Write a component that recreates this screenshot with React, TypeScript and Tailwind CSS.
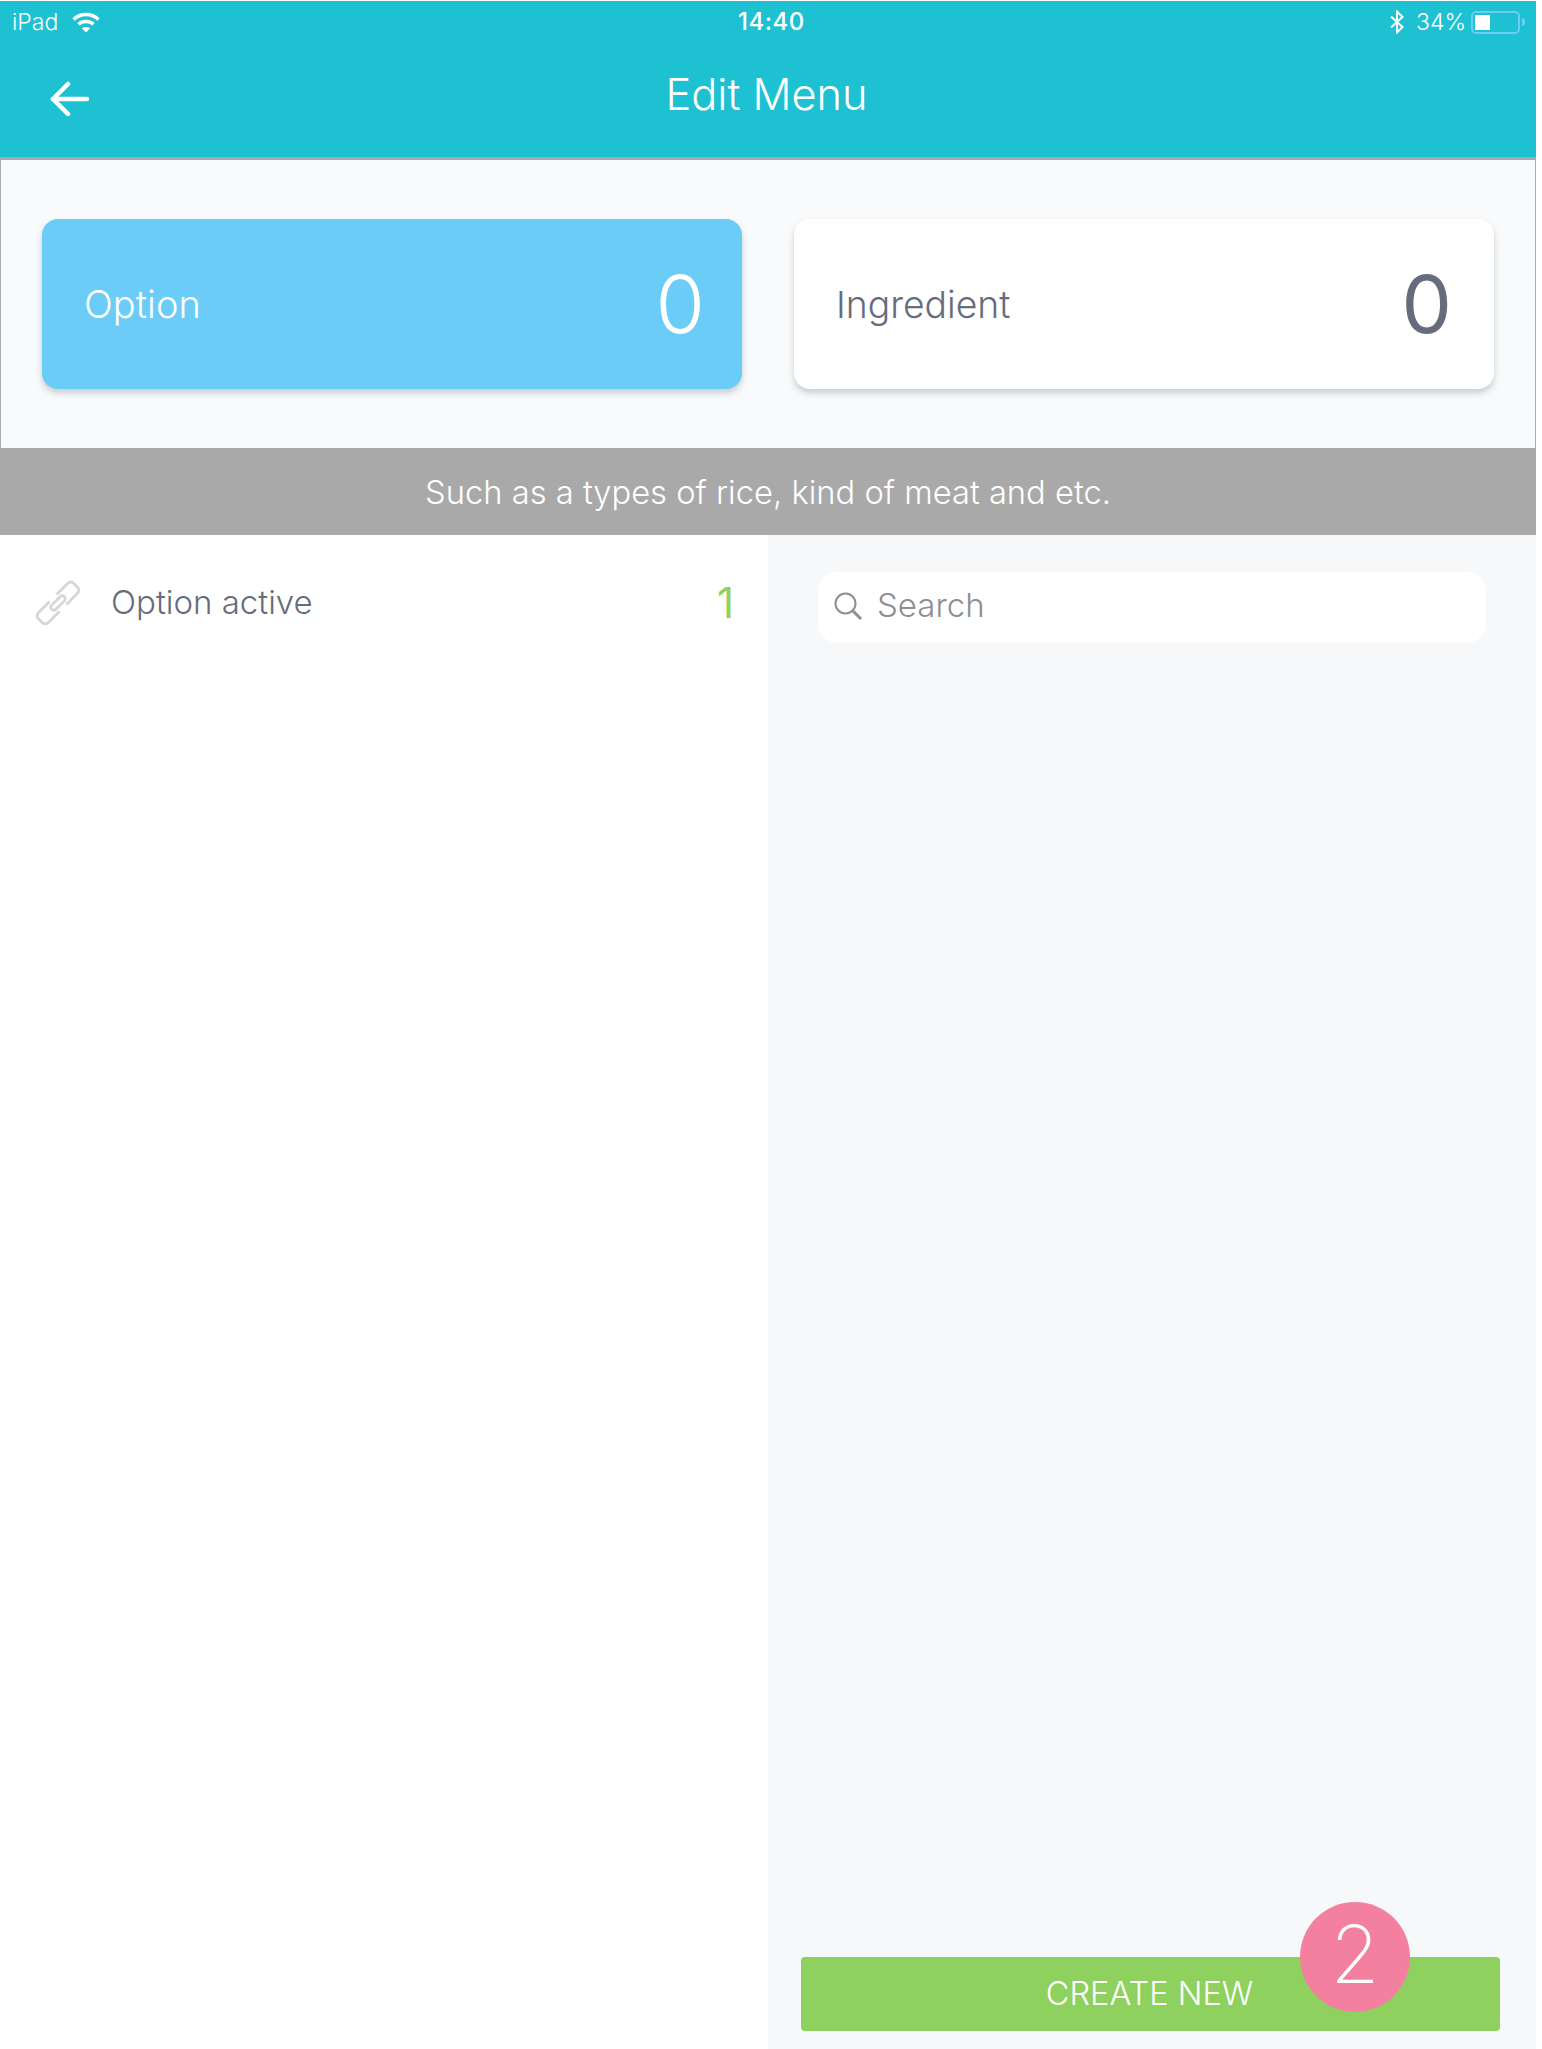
const font = "font-['Inter','Liberation_Sans',sans-serif]";

const Wifi = () => (
  <svg width="28" height="21" viewBox="0 0 28 21" fill="none" stroke="white" strokeWidth="3.4">
    <path d="M1.5 7.5C8.5 0.8 19.5 0.8 26.5 7.5" />
    <path d="M6.5 12.2C10.5 8.6 17.5 8.6 21.5 12.2" />
    <path d="M14 20.5L9.8 16.2C12 14.6 16 14.6 18.2 16.2Z" fill="white" stroke="none" />
  </svg>
);

const Bluetooth = () => (
  <svg width="16" height="24" viewBox="0 0 16 24" fill="none" stroke="white" strokeWidth="2">
    <path d="M2 6.5L13.5 17L8 22.5V1.5L13.5 7L2 17.5" />
  </svg>
);

const Battery = () => (
  <div className="flex items-center gap-[2px]">
    <div className="flex h-[23px] w-[49px] items-stretch rounded-[5px] border-2 border-[#6bcdf5] p-[2px]">
      <div className="w-[15px] bg-white" />
    </div>
    <div className="h-[8px] w-[3px] rounded-r-sm bg-[#6bcdf5]" />
  </div>
);

const BackArrow = () => (
  <svg width="40" height="36" viewBox="0 0 40 36" fill="none" stroke="white" strokeWidth="4.5" strokeLinecap="round" strokeLinejoin="round">
    <path d="M3 18H37" />
    <path d="M18 3L3 18L18 33" />
  </svg>
);

const LinkIcon = () => (
  <svg width="46" height="46" viewBox="0 0 46 46" fill="none" stroke="#d6d6d6" strokeWidth="2.8">
    <g transform="rotate(-45 23 23)">
      <path d="M18 16H2C0 16 -2 18 -2 20V26C-2 28 0 30 2 30H18" />
      <path d="M28 16H44C46 16 48 18 48 20V26C48 28 46 30 44 30H28" />
      <rect x="14" y="20" width="18" height="6" rx="3" />
    </g>
  </svg>
);

const SearchIcon = () => (
  <svg width="30" height="30" viewBox="0 0 30 30" fill="none" stroke="#8e8e93" strokeWidth="2">
    <circle cx="12.5" cy="12.5" r="10" />
    <path d="M20 20L28 28" strokeWidth="3" />
  </svg>
);

const StatCard = ({ label, active }: { label: string; active?: boolean }) => (
  <div
    className={`flex h-[170px] w-[700px] flex-none items-center justify-between rounded-2xl pl-[42px] shadow-[0_4px_6px_rgba(190,198,200,0.85)] ${
      active ? "bg-[#6bcdf7] pr-[37px] text-white" : "bg-white pr-[42px] text-[#656d7d]"
    }`}
  >
    <span className={`pt-[1px] font-light ${active ? "text-[38px]" : "text-[37.3px]"}`}>{label}</span>
    <span className={`text-[80px] ${active ? "font-[350]" : "font-normal"}`}>0</span>
  </div>
);

export default function App() {
  return (
    <div className={`${font} flex h-[2049px] w-[1536px] flex-col bg-white pt-px`}>
      <header className="h-[159px] border-b-[3px] border-[#a9a9ab] bg-[#1ec1d1] text-white">
        <div className="relative flex h-[42px] items-center justify-between pl-[12px] pr-[11px] text-[23px] font-light">
          <div className="flex items-center gap-[14px]">
            <span>iPad</span>
            <Wifi />
          </div>
          <span className="absolute left-[738px] text-[24px] font-medium tracking-[0.5px]">14:40</span>
          <div className="flex items-center gap-[11px]">
            <Bluetooth />
            <div className="flex items-center gap-[5px]">
              <span>34%</span>
              <Battery />
            </div>
          </div>
        </div>
        <div className="relative flex h-[72px] items-center justify-center pt-[34px]">
          <div className="absolute left-[50px] top-[38px]">
            <BackArrow />
          </div>
          <h1 className="mb-[4px] mr-[3px] text-[43.3px] font-light">Edit Menu</h1>
        </div>
      </header>

      <section className="flex h-[288px] items-start gap-[52px] border-x border-[#a9a9ab] bg-[#f9fafc] px-[41px] pt-[59px]">
        <StatCard label="Option" active />
        <StatCard label="Ingredient" />
      </section>

      <div className="flex h-[87px] items-center justify-center bg-[#a9a9a9] pt-[2px] text-[32.7px] font-light text-white">
        Such as a types of rice, kind of meat and etc.
      </div>

      <main className="flex flex-1">
        <div className="w-[768px] bg-white">
          <div className="flex items-center pl-[35px] pr-[34px] pt-[36px]">
            <LinkIcon />
            <span className="ml-[30px] flex-1 text-[33px] font-light text-[#656d7d]">Option active</span>
            <span className="text-[42px] font-normal text-[#8ed15e]">1</span>
          </div>
        </div>
        <div className="flex flex-1 flex-col bg-[#f6f8fa] pb-[18px] pl-[33px] pr-[36px] pt-[37px]">
          <div className="mb-auto ml-[17px] mr-[14px] flex h-[71px] items-center gap-[14px] rounded-[20px] bg-white pb-[3px] pl-[15px]">
            <SearchIcon />
            <span className="text-[33px] font-light text-[#8e8e93]">Search</span>
          </div>
          <div className="relative flex h-[74px] items-center justify-center rounded-[4px] bg-[#8ed15e] text-[32.5px] font-light text-white">
            <span className="mr-[2px]">CREATE NEW</span>
            <div className="absolute left-[499px] top-[-55px] flex h-[110px] w-[110px] items-center justify-center rounded-full bg-[#f3809f] pb-[7px] text-[80px] font-extralight">
              2
            </div>
          </div>
        </div>
      </main>
    </div>
  );
}
